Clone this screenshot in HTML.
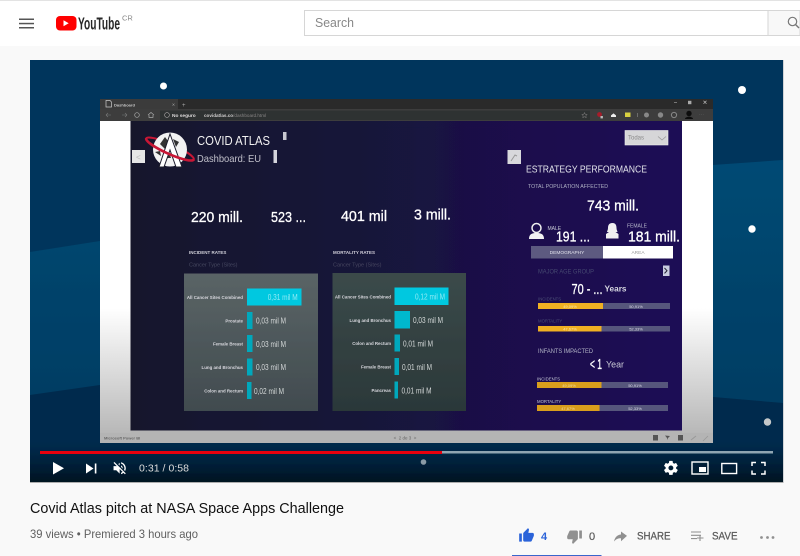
<!DOCTYPE html>
<html><head><meta charset="utf-8"><title>Covid Atlas pitch</title>
<style>
html,body{margin:0;padding:0;width:800px;height:556px;overflow:hidden;background:#f9f9f9}
svg{display:block}
text{font-family:"Liberation Sans",sans-serif}
.l{fill:#d8d8de;font-size:4.4px;text-anchor:end;font-weight:bold}
.v{fill:#d4d8d8;font-size:7.8px}
.k{fill:#fff;font-size:14.5px;stroke:#fff;stroke-width:.3px}
.m{font-size:11px;fill:#5a5a5a;stroke:#5a5a5a;stroke-width:.25px}
</style></head><body>
<svg width="800" height="556" viewBox="0 0 800 556" xmlns="http://www.w3.org/2000/svg">
<defs>
<linearGradient id="ctl" x1="0" y1="0" x2="0" y2="1"><stop offset="0" stop-color="#001a30" stop-opacity="0"/><stop offset="1" stop-color="#00121f" stop-opacity=".96"/></linearGradient>
<linearGradient id="band" x1="0" y1="0" x2="0" y2="1"><stop offset="0" stop-color="#004a74"/><stop offset="1" stop-color="#003d63"/></linearGradient>
<linearGradient id="side" x1="0" y1="0" x2="0" y2="1"><stop offset="0" stop-color="#fff"/><stop offset=".6" stop-color="#fff"/><stop offset="1" stop-color="#b8b8b8"/></linearGradient>
<linearGradient id="dash" x1="0" y1="0" x2="1" y2="0"><stop offset="0" stop-color="#16172c"/><stop offset=".45" stop-color="#19143a"/><stop offset=".7" stop-color="#1a0f4c"/><stop offset="1" stop-color="#1a0c55"/></linearGradient>
<linearGradient id="p1" x1="0" y1="0" x2="0" y2="1"><stop offset="0" stop-color="#5a6466"/><stop offset="1" stop-color="#414b4f"/></linearGradient>
<linearGradient id="p2" x1="0" y1="0" x2="0" y2="1"><stop offset="0" stop-color="#3b4a4a"/><stop offset="1" stop-color="#2b3839"/></linearGradient>
<filter id="b" x="-2%" y="-2%" width="104%" height="104%"><feGaussianBlur stdDeviation=".38"/></filter>
</defs>

<!-- page -->
<rect width="800" height="556" fill="#f9f9f9"/>
<rect width="800" height="46" fill="#fff"/>
<rect width="800" height="1" fill="#e3e3e3"/>
<!-- header -->
<g fill="#555"><rect x="19" y="18.500" width="15" height="1.500"/><rect x="19" y="22.800" width="15" height="1.500"/><rect x="19" y="27" width="15" height="1.500"/></g>
<rect x="56" y="16" width="20.500" height="14.500" rx="4" fill="#f00"/>
<path d="M63.500 20.200v6l5.200-3z" fill="#fff"/>
<text x="78" y="29.500" font-size="17.500" font-weight="bold" fill="#282828" textLength="42" lengthAdjust="spacingAndGlyphs">YouTube</text>
<text x="122" y="20.500" font-size="7.500" fill="#888">CR</text>
<rect x="304.500" y="10.500" width="463.500" height="25" fill="#fff" stroke="#d6d6d6"/>
<rect x="768" y="10.500" width="32" height="25" fill="#f8f8f8" stroke="#d6d6d6"/>
<text x="315" y="27" font-size="12.500" fill="#888" textLength="39" lengthAdjust="spacingAndGlyphs">Search</text>
<circle cx="792.500" cy="21.500" r="4.200" fill="none" stroke="#777" stroke-width="1.200"/><path d="M795.500 24.500l3.500 3.500" stroke="#777" stroke-width="1.400"/>

<!-- video -->
<g filter="url(#b)">
<rect x="30" y="60" width="753" height="422" fill="#00365c"/>
<path d="M30 252L100 241V385L30 395ZM713 165L783 160V403L713 397Z" fill="url(#band)"/>
<path d="M30 395L100 385V482H30ZM713 397L783 403V482H713ZM100 440H713V482H100Z" fill="#002b4d"/>
<rect x="30" y="442" width="753" height="40" fill="url(#ctl)"/>
<circle cx="163.500" cy="86" r="3.500" fill="#fff"/>
<circle cx="742" cy="90" r="4" fill="#fff"/>
<circle cx="752" cy="229" r="3.700" fill="#fff"/>
<circle cx="767.500" cy="422" r="3.700" fill="#c4c8ca"/>
<circle cx="423.500" cy="462" r="2.800" fill="#8a9aa5"/>

<!-- browser -->
<rect x="100" y="99" width="613" height="344" fill="#b4b4b4"/>
<rect x="100" y="99" width="613" height="11" fill="#292a2a"/>
<rect x="100" y="99" width="78" height="11" fill="#3a3a3a"/>
<rect x="100" y="109" width="613" height="12" fill="#3d3e3e"/>
<rect x="160" y="110.500" width="430" height="9.500" fill="#2f3030"/>
<path d="M106 100.500h4l1.500 1.500v5h-5.500z" fill="none" stroke="#ccc" stroke-width=".7"/>
<text x="114" y="106.500" font-size="4" fill="#c8c8c8" font-weight="bold">Dashboard</text>
<text x="172" y="106.500" font-size="5" fill="#aaa">×</text>
<text x="182" y="107" font-size="6" fill="#aaa">+</text>
<path d="M106 115h5M106 115l2-2M106 115l2 2M122 115h5M127 115l-2-2M127 115l-2 2" stroke="#777" stroke-width=".6" fill="none"/>
<circle cx="137" cy="115" r="2.300" fill="none" stroke="#aaa" stroke-width=".7"/>
<path d="M148 115l3-2.500 3 2.500M149 115v2.400h4V115" fill="none" stroke="#aaa" stroke-width=".7"/>
<circle cx="167" cy="115" r="2.400" fill="none" stroke="#aaa" stroke-width=".6"/>
<text x="172" y="117" font-size="4.800" fill="#ddd" font-weight="bold">No seguro</text>
<text x="204" y="117" font-size="4.600" fill="#cfcfcf" font-weight="bold">covidatlas.co<tspan fill="#888" font-weight="normal">/dashboard.html</tspan></text>
<path d="M584.500 112.500l.8 1.800 1.900.2-1.400 1.300.4 1.900-1.700-1-1.700 1 .4-1.900-1.400-1.300 1.900-.2z" fill="none" stroke="#888" stroke-width=".5"/>
<circle cx="599.500" cy="114.500" r="2.400" fill="#a81c2a"/><rect x="600.500" y="116" width="2.400" height="2.400" fill="#bbb"/>
<path d="M611 117v-1.600l2.500-2 2.500 2V117z" fill="#eee"/>
<rect x="625" y="112.500" width="5.500" height="4.500" fill="#d8d040"/>
<rect x="637" y="113" width=".8" height="4" fill="#777"/>
<circle cx="646.500" cy="115" r="2.500" fill="#888"/><circle cx="660.500" cy="115" r="2.700" fill="#888"/><circle cx="674" cy="115" r="2.600" fill="none" stroke="#888"/>
<circle cx="689" cy="113.500" r="2.700" fill="#0a0a0a"/><path d="M685 119c0-3 8-3 8 0z" fill="#0a0a0a"/>
<text x="699" y="116" font-size="5" fill="#666">···</text>
<path d="M674 102.500h3" stroke="#999" stroke-width=".7"/>
<rect x="688" y="100.800" width="3.400" height="3.400" fill="#aaa"/>
<path d="M703.500 100.800l3 3m0-3l-3 3" stroke="#bbb" stroke-width=".7"/>

<rect x="100" y="121" width="30.500" height="312" fill="url(#side)"/>
<rect x="682" y="121" width="31" height="312" fill="url(#side)"/>
<rect x="130.500" y="121" width="551.500" height="309.500" fill="url(#dash)"/>

<!-- logo -->
<g transform="rotate(24 170 149)"><ellipse cx="170" cy="149" rx="26" ry="5" fill="none" stroke="#c81535" stroke-width="2"/></g>
<circle cx="170" cy="149.500" r="17" fill="#f2f2f2"/>
<path d="M160 144l5-7 3 4-3 8zM173 139l6 3-3 5zM155 152l5-1 1 5zM165 158l4-6 2 6z" fill="#333"/>
<path d="M159 167l11-33 12 33h-6l-6-17-6 17z" fill="#fff" stroke="#1a1a2c" stroke-width="1"/>
<g transform="rotate(24 170 149)"><path d="M144 149A26 5 0 0 0 196 149" fill="none" stroke="#c81535" stroke-width="2.600"/></g>
<rect x="132" y="150" width="13" height="13" fill="#e6e6e6"/>
<text x="136" y="160" font-size="8" fill="#bbb">&lt;</text>
<text x="197" y="145" font-size="12.500" fill="#f2f2f2" textLength="73" lengthAdjust="spacingAndGlyphs">COVID ATLAS</text>
<text x="197" y="162" font-size="10.500" fill="#c0c0ca" textLength="64" lengthAdjust="spacingAndGlyphs">Dashboard: EU</text>
<rect x="283" y="132" width="3.500" height="8" fill="#c8c8d0"/>
<rect x="273.500" y="150" width="3.500" height="13" fill="#d4d4dc"/>

<text class="k" x="191" y="222" textLength="52" lengthAdjust="spacingAndGlyphs">220 mill.</text>
<text class="k" x="271" y="222" textLength="35" lengthAdjust="spacingAndGlyphs">523 ...</text>
<text class="k" x="341" y="221" textLength="46" lengthAdjust="spacingAndGlyphs">401 mil</text>
<text class="k" x="414" y="219.500" textLength="37" lengthAdjust="spacingAndGlyphs">3 mill.</text>

<text x="189" y="254" font-size="4.500" font-weight="bold" fill="#d0d0da">INCIDENT RATES</text>
<text x="333" y="254" font-size="4.500" font-weight="bold" fill="#d0d0da">MORTALITY RATES</text>
<text x="189" y="266.500" font-size="5.500" fill="#454860">Cancer Type (Sites)</text>
<text x="333" y="266.500" font-size="5.500" fill="#454860">Cancer Type (Sites)</text>

<rect x="184" y="273.500" width="134" height="137.500" fill="url(#p1)"/>
<rect x="332.500" y="273" width="133.500" height="138" fill="url(#p2)"/>
<rect x="247" y="288.500" width="54.500" height="17" fill="#00c8e0"/>
<rect x="247" y="312" width="5.500" height="17" fill="#00a8bc"/>
<rect x="247" y="335" width="5.500" height="17" fill="#00a8bc"/>
<rect x="247" y="358.500" width="5.500" height="17" fill="#00a8bc"/>
<rect x="247" y="382" width="4.500" height="17" fill="#00a8bc"/>
<text class="l" x="243" y="299">All Cancer Sites Combined</text>
<text class="l" x="243" y="322.500">Prostate</text>
<text class="l" x="243" y="345.500">Female Breast</text>
<text class="l" x="243" y="369">Lung and Bronchus</text>
<text class="l" x="243" y="392.500">Colon and Rectum</text>
<text x="267.700" y="300" font-size="7.800" fill="#8eeaf5" textLength="30" lengthAdjust="spacingAndGlyphs">0,31 mil M</text>
<text class="v" x="256" y="323.500" textLength="30" lengthAdjust="spacingAndGlyphs">0,03 mil M</text>
<text class="v" x="256" y="347" textLength="30" lengthAdjust="spacingAndGlyphs">0,03 mil M</text>
<text class="v" x="256" y="370" textLength="30" lengthAdjust="spacingAndGlyphs">0,03 mil M</text>
<text class="v" x="254" y="394" textLength="30" lengthAdjust="spacingAndGlyphs">0,02 mil M</text>

<rect x="394.500" y="287.500" width="54" height="17.500" fill="#00c8e0"/>
<rect x="394.500" y="311" width="15.500" height="17.500" fill="#00b8ce"/>
<rect x="394.500" y="334.500" width="5.500" height="17" fill="#00a8bc"/>
<rect x="394.500" y="358" width="4.500" height="17" fill="#00a8bc"/>
<rect x="394.500" y="381.500" width="3.500" height="17" fill="#00a8bc"/>
<text class="l" x="391" y="298.500">All Cancer Sites Combined</text>
<text class="l" x="391" y="322">Lung and Bronchus</text>
<text class="l" x="391" y="345">Colon and Rectum</text>
<text class="l" x="391" y="368.500">Female Breast</text>
<text class="l" x="391" y="392">Pancreas</text>
<text x="415" y="299.500" font-size="7.800" fill="#8eeaf5" textLength="30" lengthAdjust="spacingAndGlyphs">0,12 mil M</text>
<text class="v" x="413" y="323" textLength="30" lengthAdjust="spacingAndGlyphs">0,03 mil M</text>
<text class="v" x="403" y="346.500" textLength="30" lengthAdjust="spacingAndGlyphs">0,01 mil M</text>
<text class="v" x="402" y="370" textLength="30" lengthAdjust="spacingAndGlyphs">0,01 mil M</text>
<text class="v" x="401.500" y="393.500" textLength="30" lengthAdjust="spacingAndGlyphs">0,01 mil M</text>

<!-- right panel -->
<rect x="625" y="130.500" width="43" height="14.500" fill="#d6d6d8" stroke="#eee" stroke-width=".6"/>
<text x="628" y="139.500" font-size="6" fill="#888">Todas</text>
<path d="M658 136.500l4 3.500 4-3.500" fill="none" stroke="#999" stroke-width=".8"/>
<rect x="507.500" y="150" width="13.500" height="14" fill="#d8d8dc"/>
<path d="M511 161l2-3 2-3 2 1" fill="none" stroke="#999" stroke-width="1"/>
<text x="526" y="172.500" font-size="10.500" fill="#e2e2ea" textLength="121" lengthAdjust="spacingAndGlyphs">ESTRATEGY PERFORMANCE</text>
<text x="528" y="188" font-size="5.500" fill="#b0b0c4" textLength="80" lengthAdjust="spacingAndGlyphs">TOTAL POPULATION AFFECTED</text>
<text class="k" x="587" y="210.500" textLength="52" lengthAdjust="spacingAndGlyphs">743 mill.</text>
<circle cx="536.500" cy="228" r="4.500" fill="none" stroke="#eee" stroke-width="1.500"/>
<path d="M529 239c0-5 3-6 7.500-6s7.500 1 7.500 6z" fill="#f2f2f2"/>
<text x="547.500" y="230" font-size="5" fill="#c8c8d4">MALE</text>
<text class="k" x="556" y="241.500" textLength="34" lengthAdjust="spacingAndGlyphs">191 ...</text>
<path d="M612.500 223c3.500 0 4 3 4 5s1 3 1 4h-2l3 2v4.500h-12.500V234l3-2h-2c0-1 1-2 1-4s.5-5 4.500-5z" fill="#f0f0f0"/>
<text x="627" y="227.500" font-size="5" fill="#b8b8cc">FEMALE</text>
<text class="k" x="628" y="241.500" textLength="52" lengthAdjust="spacingAndGlyphs">181 mill.</text>
<rect x="531" y="246" width="72" height="12.500" fill="#5d5a80"/>
<rect x="603" y="246" width="70" height="12.500" fill="#fff"/>
<text x="567" y="254" font-size="4.800" fill="#e4e4ee" text-anchor="middle">DEMOGRAPHY</text>
<text x="638" y="254" font-size="4.800" fill="#999" text-anchor="middle">AREA</text>
<text x="538" y="273.500" font-size="6" fill="#474770" textLength="56" lengthAdjust="spacingAndGlyphs">MAJOR AGE GROUP</text>
<rect x="663" y="265.500" width="6.500" height="10.500" fill="#c8cce0"/>
<path d="M664.500 268l2.500 2.700-2.500 2.700" fill="none" stroke="#223" stroke-width="1"/>
<text class="k" x="571.500" y="294" textLength="31" lengthAdjust="spacingAndGlyphs">70 - ...</text>
<text x="604.500" y="291.500" font-size="8.500" fill="#d8d8e2" font-weight="bold" textLength="22" lengthAdjust="spacingAndGlyphs">Years</text>
<text x="538" y="300.500" font-size="4.300" fill="#4d4d76">INCIDENTS</text>
<rect x="538" y="303" width="132" height="6" fill="#57567c"/><rect x="538" y="303" width="65" height="6" fill="#f0b024"/>
<text x="570" y="308" font-size="4" fill="#f8e6b0" text-anchor="middle">49,09%</text>
<text x="636" y="308" font-size="4" fill="#dcdce8" text-anchor="middle">50,91%</text>
<text x="538" y="322.500" font-size="4.300" fill="#4d4d76">MORTALITY</text>
<rect x="538" y="326" width="132" height="5.500" fill="#57567c"/><rect x="538" y="326" width="63.500" height="5.500" fill="#f0b024"/>
<text x="570" y="330.500" font-size="4" fill="#f8e6b0" text-anchor="middle">47,67%</text>
<text x="636" y="330.500" font-size="4" fill="#dcdce8" text-anchor="middle">52,33%</text>
<text x="538" y="353" font-size="6.300" fill="#b4b4c6" textLength="55" lengthAdjust="spacingAndGlyphs">INFANTS IMPACTED</text>
<text class="k" x="590" y="369" textLength="12" lengthAdjust="spacingAndGlyphs">&lt; 1</text>
<text x="606" y="367.500" font-size="9" fill="#c8c8d4" textLength="18" lengthAdjust="spacingAndGlyphs">Year</text>
<text x="537" y="380.500" font-size="4.300" fill="#c4c4d4">INCIDENTS</text>
<rect x="537" y="382" width="131" height="6" fill="#57567c"/><rect x="537" y="382" width="64.500" height="6" fill="#d99e1c"/>
<text x="569" y="387" font-size="4" fill="#f0dca0" text-anchor="middle">49,09%</text>
<text x="635" y="387" font-size="4" fill="#dcdce8" text-anchor="middle">50,91%</text>
<text x="537" y="403" font-size="4.300" fill="#c4c4d4">MORTALITY</text>
<rect x="537" y="405" width="131" height="6" fill="#57567c"/><rect x="537" y="405" width="62.500" height="6" fill="#d99e1c"/>
<text x="568" y="410" font-size="4" fill="#f0dca0" text-anchor="middle">47,67%</text>
<text x="635" y="410" font-size="4" fill="#dcdce8" text-anchor="middle">52,33%</text>

<!-- power bi footer -->
<text x="104" y="439.500" font-size="4" fill="#666" font-weight="bold">Microsoft Power BI</text>
<text x="405" y="439.500" font-size="4.500" fill="#666" text-anchor="middle">&lt;&#160;&#160;2 de 3&#160;&#160;&gt;</text>
<rect x="653" y="435" width="5" height="5.500" fill="#555"/>
<path d="M665 435.500l5 .5-2 2v2l-1-2z" fill="#555"/>
<rect x="678" y="435" width="5" height="5.500" fill="#555"/>
<path d="M691 440l5-4" stroke="#999" stroke-width="1"/><path d="M703 441l5-5" stroke="#999" stroke-width=".8"/>

<!-- controls -->
<rect x="40" y="451" width="402" height="3" fill="#e8000c"/>
<rect x="442" y="451" width="331" height="2.500" fill="#8fa5b2"/>
<path d="M53 462v12.500l11-6.200z" fill="#fff"/>
<path d="M86 463.500v10l7.500-5zM94.800 463.500h1.600v10h-1.600z" fill="#fff"/>
<g transform="translate(111.500 460) scale(.68)"><path fill="#fff" d="M16.500 12c0-1.770-1.020-3.290-2.500-4.030v2.210l2.450 2.450c.03-.2.050-.41.050-.63zm2.500 0c0 .94-.2 1.820-.54 2.640l1.510 1.510C20.630 14.910 21 13.500 21 12c0-4.280-2.990-7.860-7-8.770v2.060c2.890.86 5 3.540 5 6.710zM4.270 3L3 4.270 7.730 9H3v6h4l5 5v-6.730l4.250 4.250c-.67.52-1.420.93-2.250 1.180v2.060c1.380-.31 2.630-.95 3.690-1.810L19.730 21 21 19.730l-9-9L4.270 3zM12 4L9.910 6.090 12 8.180V4z"/></g>
<text x="139" y="471.500" font-size="10.500" fill="#dcdcdc" textLength="50">0:31 / 0:58</text>
<g transform="translate(662.500 459.500) scale(.7)"><path fill="#fff" d="M19.430 12.980c.04-.32.07-.64.07-.98s-.03-.66-.07-.98l2.110-1.650c.19-.15.24-.42.12-.64l-2-3.460c-.12-.22-.39-.3-.61-.22l-2.490 1c-.52-.4-1.080-.73-1.690-.98l-.38-2.650C14.460 2.180 14.250 2 14 2h-4c-.25 0-.46.18-.49.42l-.38 2.650c-.61.25-1.170.59-1.690.98l-2.490-1c-.23-.09-.49 0-.61.22l-2 3.460c-.13.22-.07.49.12.64l2.110 1.650c-.04.32-.07.65-.07.98s.03.66.07.98l-2.110 1.650c-.19.15-.24.42-.12.64l2 3.460c.12.22.39.3.61.22l2.490-1c.52.4 1.080.73 1.690.98l.38 2.650c.03.24.24.42.49.42h4c.25 0 .46-.18.49-.42l.38-2.650c.61-.25 1.170-.59 1.690-.98l2.490 1c.23.09.49 0 .61-.22l2-3.460c.12-.22.07-.49-.12-.64l-2.110-1.650zM12 15.500c-1.930 0-3.500-1.570-3.500-3.500s1.570-3.500 3.500-3.500 3.500 1.570 3.500 3.500-1.570 3.500-3.500 3.500z"/></g>
<rect x="692" y="462" width="16" height="12" fill="none" stroke="#fff" stroke-width="1.400"/>
<rect x="699" y="467" width="7" height="5" fill="#fff"/>
<rect x="721.800" y="463.500" width="14.800" height="10" fill="none" stroke="#fff" stroke-width="1.400"/>
<path d="M752 466v-3.500h4M761 462.500h4v3.500M752 470.500v3.500h4M761 474h4v-3.500" fill="none" stroke="#fff" stroke-width="1.500"/>
</g>
<rect x="30" y="482" width="753.500" height=".8" fill="#9a9a9a"/>
<rect x="783" y="60" width=".6" height="422" fill="#b8bcc0"/>

<!-- below video -->
<text x="30" y="513" font-size="14.500" fill="#111" textLength="314" lengthAdjust="spacingAndGlyphs">Covid Atlas pitch at NASA Space Apps Challenge</text>
<text x="30" y="538" font-size="12" fill="#606060" textLength="168" lengthAdjust="spacingAndGlyphs">39 views • Premiered 3 hours ago</text>
<g transform="translate(518.500 527.500) scale(.67)"><path fill="#2b63d9" d="M1 21h4V9H1v12zm22-11c0-1.100-.9-2-2-2h-6.310l.95-4.570.03-.32c0-.41-.17-.79-.44-1.060L14.170 1 7.590 7.590C7.220 7.950 7 8.450 7 9v10c0 1.100.9 2 2 2h9c.83 0 1.540-.5 1.800-1.220l3.020-7.050c.09-.23.14-.47.14-.73v-1.910l-.01-.01L23 10z"/></g>
<text x="541" y="540" font-size="11" font-weight="bold" fill="#2b63d9">4</text>
<g transform="translate(566.500 528.500) scale(.67)"><path fill="#909090" d="M15 3H6c-.83 0-1.540.5-1.840 1.220l-3.020 7.050c-.09.23-.14.47-.14.73v1.910l.01.01L1 14c0 1.100.9 2 2 2h6.310l-.95 4.570-.03.32c0 .41.17.79.44 1.060L9.830 23l6.590-6.590c.36-.36.58-.86.58-1.410V5c0-1.100-.9-2-2-2zm4 0v12h4V3h-4z"/></g>
<text x="589" y="540" font-size="11" fill="#606060" stroke="#606060" stroke-width=".25">0</text>
<path d="M621 531.500v3c-3 .3-6 2-7 7 2-2.500 4-3.300 7-3.300v3l6-5.300z" fill="#909090"/>
<text class="m" x="637" y="539.500" textLength="33.500" lengthAdjust="spacingAndGlyphs">SHARE</text>
<path d="M691 532h10M691 535.300h10M691 538.600h6M700 535v6M697 538h6.500" fill="none" stroke="#909090" stroke-width="1.100"/>
<text class="m" x="712" y="539.500" textLength="25.500" lengthAdjust="spacingAndGlyphs">SAVE</text>
<g fill="#909090"><circle cx="761.500" cy="537.500" r="1.400"/><circle cx="767.500" cy="537.500" r="1.400"/><circle cx="773" cy="537.500" r="1.400"/></g>
<rect x="512" y="555" width="89.500" height="1" fill="#3a66cc"/>
</svg>
</body></html>
